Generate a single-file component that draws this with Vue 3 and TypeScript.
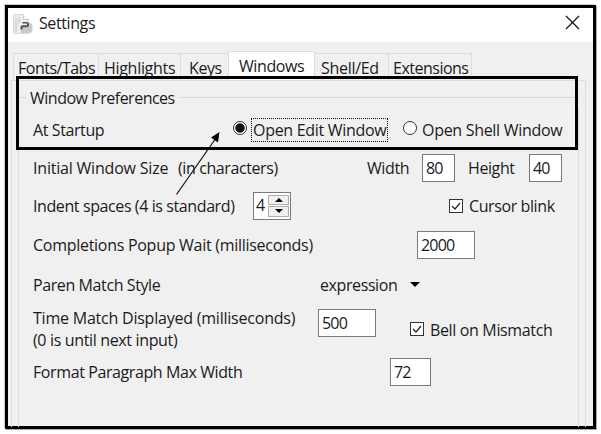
<script setup lang="ts">
import { ref } from 'vue'

const tabs = [
  { name: 'Fonts/Tabs', key: 'fonts' },
  { name: 'Highlights', key: 'highlights' },
  { name: 'Keys', key: 'keys' },
  { name: 'Windows', key: 'windows' },
  { name: 'Shell/Ed', key: 'shell' },
  { name: 'Extensions', key: 'extensions' },
]
const active = ref('windows')
const startup = ref('edit')
</script>

<template>
  <main class="screen">
    <section class="window">
      <header class="titlebar">
        <svg class="app-icon" width="20" height="21" viewBox="0 0 20 21">
          <path d="M.5.5h10l5 5v14H.5z" fill="#ececec" stroke="#dadada" />
          <path d="M3 4v14M6 3v6" stroke="#d8d8d8" stroke-width="2" />
          <path d="M10.500.5v5h5" fill="#f8f8f8" stroke="#d0d0d0" />
          <path d="M8 19v-4q0-2 2-2h6V9h1q2.500 0 2.500 4v3q0 3-3 3z" fill="#c9c9c9" />
          <path d="M7.500 15.500v-2.500q0-1.800 2-1.800h4.500V9.500h-4.500V8h4.500q2 0 2 2v1.500q0 1.700-2 1.700h-3.500q-1 0-1 1v1.300z" fill="#555" />
        </svg>
        <h1 class="title">Settings</h1>
        <svg class="close" width="15" height="15" viewBox="0 0 15 15">
          <path d="M1 1l13 13M14 1L1 14" stroke="#111" stroke-width="1.2" />
        </svg>
      </header>

      <div class="body">
        <nav class="tabs">
          <button
            v-for="tab in tabs"
            :key="tab.key"
            :class="['tab', tab.key, { active: active === tab.key }]"
            @click="active = tab.key"
          >{{ tab.name }}</button>
        </nav>
        <div class="pane">
          <div class="group-title"><span class="legend">Window Preferences</span></div>
          <div class="group">
            <div class="row startup">
              <span class="label">At Startup</span>
              <span class="radio" :class="{ on: startup === 'edit' }" @click="startup = 'edit'"></span>
              <span class="focus">Open Edit Window</span>
              <span class="radio second" :class="{ on: startup === 'shell' }" @click="startup = 'shell'"></span>
              <span class="t-shell">Open Shell Window</span>
            </div>
            <div class="row size">
              <span class="label">Initial Window Size</span>
              <span class="t-chars">(in characters)</span>
              <span class="t-width">Width</span>
              <span class="field small">80</span>
              <span class="t-height">Height</span>
              <span class="field small">40</span>
            </div>
            <div class="row indent">
              <span class="label">Indent spaces (4 is standard)</span>
              <span class="spin">
                <span class="digit">4</span>
                <span class="steps">
                  <span class="step"><svg width="8" height="4"><path d="M0 4L4 0l4 4z" /></svg></span>
                  <span class="step"><svg width="8" height="4"><path d="M0 0l4 4 4-4z" /></svg></span>
                </span>
              </span>
              <span class="check"><svg width="12" height="12"><path d="M2 6l3 3 5-6" /></svg></span>
              <span>Cursor blink</span>
            </div>
            <div class="row popup">
              <span class="label">Completions Popup Wait (milliseconds)</span>
              <span class="field">2000</span>
            </div>
            <div class="row paren">
              <span class="label">Paren Match Style</span>
              <span class="t-expr">expression</span>
              <svg class="caret" width="10" height="5"><path d="M0 0h10L5 5z" /></svg>
            </div>
            <div class="row time">
              <div class="label">
                <div class="t-time">Time Match Displayed (milliseconds)</div>
                <div class="t-zero">(0 is until next input)</div>
              </div>
              <span class="field">500</span>
              <span class="check"><svg width="12" height="12"><path d="M2 6l3 3 5-6" /></svg></span>
              <span class="t-bell">Bell on Mismatch</span>
            </div>
            <div class="row format">
              <span class="label">Format Paragraph Max Width</span>
              <span class="field medium">72</span>
            </div>
          </div>
        </div>
      </div>
    </section>

    <div class="highlight"></div>
    <svg class="pointer" width="52" height="72" viewBox="0 0 52 72">
      <path d="M4.500 66.500L44 10" stroke="#111" stroke-width="1.200" />
      <path d="M47.500 4l-1.500 10.500-7-5z" fill="#000" />
    </svg>
  </main>
</template>

<style>
body {
  margin: 0;
  background: #fff;
}
</style>

<style scoped>
* {
  box-sizing: border-box;
}
.screen {
  position: relative;
  width: 601px;
  height: 434px;
  padding: 5px;
  overflow: hidden;
  background: #fff;
  color: #1b1b1b;
  font: 16px/22px 'Open Sans', 'Noto Sans', sans-serif;
  letter-spacing: -0.4px;
  white-space: pre;
}
.window {
  width: 591px;
  height: 424px;
  border: 3px solid #000;
  box-shadow: 1px 1px 0 #aaa, -1px -1px 0 #ccc;
  display: flex;
  flex-direction: column;
  background: #f0f0f0;
}
.titlebar {
  display: flex;
  align-items: center;
  flex: 0 0 34px;
  padding: 0 13px 4px 5px;
  background: #fff;
}
.app-icon {
  margin-top: 3px;
}
.title {
  flex: 1;
  margin: 0 0 0 6px;
  font: inherit;
}
.close {
  margin-top: -1px;
}
.body {
  flex: 1;
  display: flex;
  flex-direction: column;
  padding: 9px 7px 0 3px;
}
.tabs {
  display: flex;
  align-items: flex-end;
  height: 29px;
  padding-left: 2px;
}
.tab {
  height: 27px;
  padding: 2px 0 0 4px;
  border: 1px solid #dcdcdc;
  border-width: 1px 1px 0 0;
  background: #f0f0f0;
  color: inherit;
  font: inherit;
  letter-spacing: inherit;
  text-align: left;
}
.fonts { width: 86px; border-left-width: 1px; letter-spacing: -0.5px; }
.highlights { width: 82px; padding-left: 5px; letter-spacing: -0.3px; }
.keys { width: 47px; padding-left: 8px; border-right: 0; }
.windows { width: 87px; padding-left: 10px; border-left-width: 1px; }
.shell { width: 74px; padding-left: 6px; letter-spacing: -0.3px; }
.extensions { width: 83px; padding-left: 4px; letter-spacing: -0.5px; }
.tab.active {
  height: 29px;
  padding-top: 0;
  background: #fff;
}
.pane {
  flex: 1;
  padding: 6px 6px 0;
  border: 1px solid #dcdcdc;
  border-bottom: 0;
}
.group-title {
  display: flex;
  align-items: center;
  height: 22px;
  gap: 4px;
}
.group-title::before,
.group-title::after {
  content: '';
  height: 1px;
  margin-top: -1px;
  background: #d8d8d8;
}
.group-title::before { width: 8px; }
.group-title::after { flex: 1; }
.legend { width: 145px; letter-spacing: -0.5px; }
.group {
  height: 318px;
  border: 1px solid #dcdcdc;
  border-width: 0 1px;
}
.row {
  display: flex;
  align-items: center;
  height: 39px;
  padding-left: 14px;
}
.row > * { flex-shrink: 0; }
.startup { height: 41px; }
.startup .label { width: 200px; }
.radio {
  width: 14px;
  height: 14px;
  margin-top: -3px;
  border: 1px solid #333;
  border-radius: 50%;
  background: #fff;
}
.radio.on {
  background: radial-gradient(circle, #111 0 4.300px, #fff 5px);
}
.radio.second { margin-left: 15px; }
.focus {
  width: 137px;
  height: 24px;
  margin-left: 4px;
  padding-left: 1px;
  line-height: 23px;
  letter-spacing: -0.3px;
  border: 1px dotted #111;
}
.t-shell { margin-left: 5px; letter-spacing: -0.3px; }
.size { height: 36px; }
.size .label { width: 145px; letter-spacing: -0.2px; }
.t-chars { width: 189px; }
.t-width { width: 55px; }
.t-height { width: 61px; margin-left: 13px; }
.field {
  width: 58px;
  height: 28px;
  padding-left: 3px;
  border: 1px solid #7a7a7a;
  background: #fff;
  line-height: 26px;
  letter-spacing: -0.8px;
}
.small { width: 33px; }
.medium { width: 41px; }
.indent { height: 40px; }
.indent .label { width: 220px; }
.spin {
  display: flex;
  width: 38px;
  height: 28px;
  margin-top: -1px;
  border: 1px solid #7a7a7a;
  background: #fff;
}
.digit {
  width: 14px;
  padding-left: 2px;
  line-height: 25px;
}
.steps {
  display: flex;
  flex: 1;
  flex-direction: column;
  gap: 1px;
  padding: 2px 1px 2px 0;
}
.step {
  display: flex;
  flex: 1;
  align-items: center;
  justify-content: center;
  border: 1px solid #adadad;
  background: #f0f0f0;
}
.check {
  width: 14px;
  height: 14px;
  margin-top: -1px;
  border: 1px solid #333;
  background: #fff;
}
.check svg { display: block; }
.check path {
  fill: none;
  stroke: #222;
  stroke-width: 1.2;
}
.indent .check { margin: -1px 6px 0 158px; }
.popup { height: 38px; }
.popup .label { width: 384px; letter-spacing: -0.28px; }
.paren { height: 41px; }
.paren .label { width: 287px; }
.t-expr { width: 90px; }
.time { height: 47px; }
.time .label { width: 285px; }
.t-time { letter-spacing: -0.22px; }
.t-zero { letter-spacing: -0.35px; }
.time .field { margin-top: -12px; }
.time .check { margin: 0 6px 0 34px; }
.t-bell { margin-top: 2px; letter-spacing: -0.35px; }
.format .label { width: 357px; padding-top: 1px; }
.highlight {
  position: absolute;
  left: 16px;
  top: 76px;
  width: 562px;
  height: 74px;
  border: 3px solid #000;
}
.pointer {
  position: absolute;
  left: 172px;
  top: 128px;
}
</style>
